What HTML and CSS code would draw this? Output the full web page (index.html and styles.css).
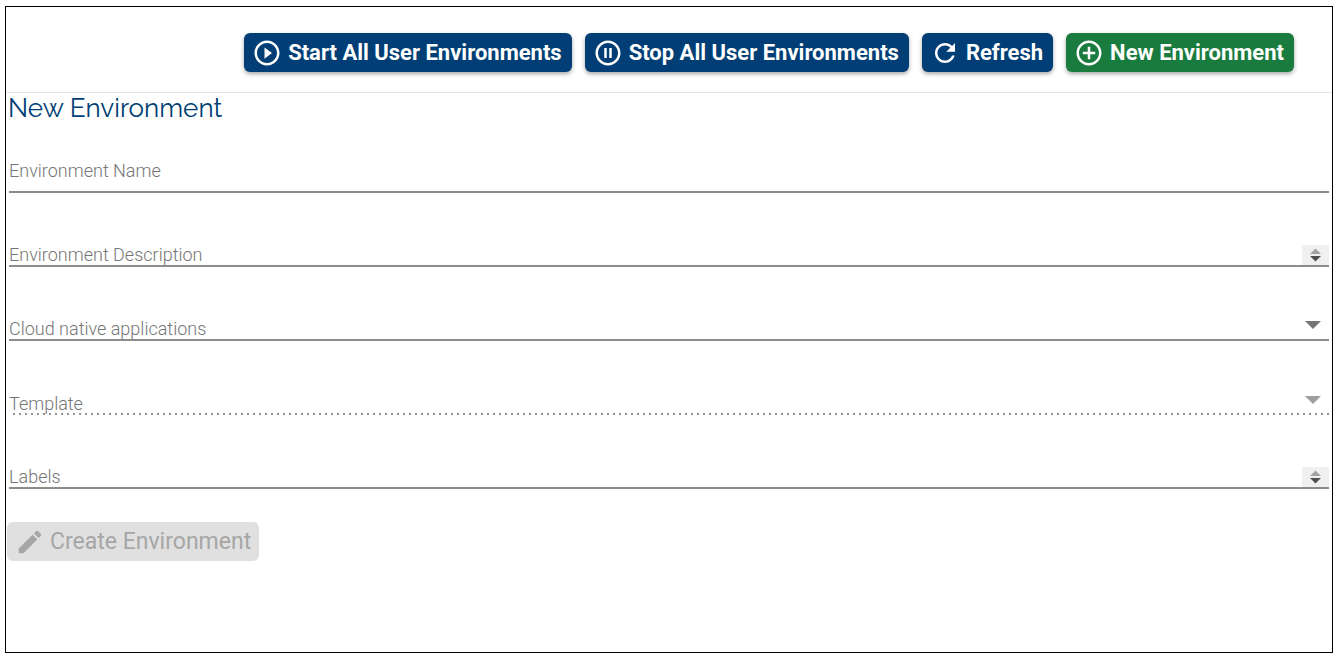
FILE: index.html
```html
<!DOCTYPE html>
<html lang="en">
<head>
<meta charset="utf-8">
<title>New Environment</title>
<link rel="stylesheet" href="styles.css">
</head>
<body>
<main class="panel">
  <header class="toolbar">
    <button class="btn btn-primary" type="button">
      <svg class="icon" viewBox="0 0 24 24" aria-hidden="true"><path d="M10 16.500l6-4.500-6-4.500v9zM12 2C6.480 2 2 6.480 2 12s4.480 10 10 10 10-4.480 10-10S17.520 2 12 2zm0 18c-4.410 0-8-3.590-8-8s3.590-8 8-8 8 3.590 8 8-3.590 8-8 8z"/></svg>
      <span>Start All User Environments</span>
    </button>
    <button class="btn btn-primary" type="button">
      <svg class="icon" viewBox="0 0 24 24" aria-hidden="true"><path d="M9 16h2V8H9v8zm3-14C6.480 2 2 6.480 2 12s4.480 10 10 10 10-4.480 10-10S17.520 2 12 2zm0 18c-4.410 0-8-3.590-8-8s3.590-8 8-8 8 3.590 8 8-3.590 8-8 8zm1-4h2V8h-2v8z"/></svg>
      <span>Stop All User Environments</span>
    </button>
    <button class="btn btn-primary" type="button">
      <svg class="icon" viewBox="0 0 24 24" aria-hidden="true"><path d="M17.650 6.350C16.200 4.900 14.210 4 12 4c-4.420 0-7.990 3.580-7.990 8s3.570 8 7.990 8c3.730 0 6.840-2.550 7.730-6h-2.080c-.82 2.330-3.040 4-5.650 4-3.310 0-6-2.690-6-6s2.690-6 6-6c1.660 0 3.140.69 4.220 1.780L13 11h7V4l-2.350 2.350z"/></svg>
      <span>Refresh</span>
    </button>
    <button class="btn btn-success" type="button">
      <svg class="icon" viewBox="0 0 24 24" aria-hidden="true"><path d="M13 7h-2v4H7v2h4v4h2v-4h4v-2h-4V7zm-1-5C6.480 2 2 6.480 2 12s4.480 10 10 10 10-4.480 10-10S17.520 2 12 2zm0 18c-4.410 0-8-3.590-8-8s3.590-8 8-8 8 3.590 8 8-3.590 8-8 8z"/></svg>
      <span>New Environment</span>
    </button>
  </header>
  <h1 class="title">New Environment</h1>
  <form class="form">
    <div class="field field-name">
      <label class="label" for="name">Environment Name</label>
      <input class="control" id="name" type="text">
    </div>
    <div class="field">
      <label class="label" for="description">Environment Description</label>
      <textarea class="control" id="description" rows="1"></textarea>
      <svg class="stepper" viewBox="0 0 27 19" aria-hidden="true"><path class="step-up" d="M8 8.500L13.500 3l5.500 5.500z"/><path class="step-down" d="M8 10.500h11L13.500 16z"/></svg>
    </div>
    <div class="field">
      <label class="label" for="apps">Cloud native applications</label>
      <select class="control" id="apps"><option></option></select>
      <svg class="arrow" viewBox="0 0 16 8" aria-hidden="true"><path d="M0 0h16L8 8z"/></svg>
    </div>
    <div class="field field-disabled">
      <label class="label" for="template">Template</label>
      <select class="control" id="template" disabled><option></option></select>
      <svg class="arrow" viewBox="0 0 16 8" aria-hidden="true"><path d="M0 0h16L8 8z"/></svg>
    </div>
    <div class="field">
      <label class="label" for="labels">Labels</label>
      <textarea class="control" id="labels" rows="1"></textarea>
      <svg class="stepper" viewBox="0 0 27 19" aria-hidden="true"><path class="step-up" d="M8 8.500L13.500 3l5.500 5.500z"/><path class="step-down" d="M8 10.500h11L13.500 16z"/></svg>
    </div>
    <button class="btn btn-create" type="submit" disabled>
      <svg class="icon" viewBox="0 0 24 24" aria-hidden="true"><path d="M3 17.250V21h3.750L17.810 9.940l-3.750-3.750L3 17.250zM20.710 7.040c.39-.39.39-1.020 0-1.410l-2.340-2.340c-.39-.39-1.020-.39-1.410 0l-1.830 1.830 3.750 3.750 1.830-1.830z"/></svg>
      <span>Create Environment</span>
    </button>
  </form>
</main>
</body>
</html>
```
FILE: styles.css
```css
* {
  box-sizing: border-box;
}

body {
  margin: 0;
  padding: 6px 6px 6px 5px;
  background: #fff;
  font-family: Roboto, "Liberation Sans", sans-serif;
}

.panel {
  min-height: calc(100vh - 12px);
  border: 1px solid #000;
}

.toolbar {
  display: flex;
  flex-wrap: wrap;
  justify-content: flex-end;
  gap: 13px;
  padding: 26px 38px 20px;
  border-bottom: 1px solid #e3e5e8;
}

.btn {
  display: flex;
  align-items: center;
  gap: 6px;
  height: 39px;
  padding: 0 10px 0 8px;
  border: 0;
  border-radius: 6px;
  color: #fff;
  font-family: inherit;
  font-size: 22px;
  font-weight: 700;
  line-height: 39px;
  white-space: nowrap;
}

.btn-primary,
.btn-success {
  box-shadow: 0 2px 4px rgba(0, 0, 0, 0.35);
}

.btn-primary {
  background: #003e75;
}

.btn-success {
  background: #197b3e;
}

.icon {
  width: 30px;
  height: 30px;
  fill: currentColor;
}

.title {
  margin: 0;
  padding-left: 2px;
  color: #003e75;
  font-family: Raleway, Lato, sans-serif;
  font-size: 26px;
  font-weight: 400;
  line-height: 30px;
}

.form {
  padding: 0 3px 0 1px;
}

.field {
  display: grid;
  grid-template-columns: 1fr auto;
  align-items: end;
  height: 74px;
  margin-left: 2px;
  border-bottom: 2px solid #8c8c8c;
}

.field-name {
  height: 70px;
  padding-bottom: 10px;
}

.label {
  grid-area: 1 / 1;
  z-index: 1;
  color: #757575;
  font-size: 18px;
  font-weight: 300;
  line-height: 21px;
  pointer-events: none;
}

.control {
  grid-area: 1 / 1 / 2 / 3;
  width: 100%;
  height: 24px;
  margin: 0;
  padding: 0;
  border: 0;
  outline: 0;
  appearance: none;
  background: transparent;
  color: #222;
  font: inherit;
  font-size: 18px;
  resize: none;
  overflow: hidden;
}

.stepper {
  grid-area: 1 / 2;
  width: 27px;
  height: 20px;
  background: #f0f0f0;
}

.step-up {
  fill: #a3a3a3;
}

.step-down {
  fill: #505050;
}

.arrow {
  grid-area: 1 / 2;
  width: 16px;
  height: 8px;
  margin: 0 8px 10px 0;
  fill: #757575;
  pointer-events: none;
}

.field-disabled {
  border-bottom: 0;
  padding-bottom: 1px;
  background: repeating-linear-gradient(to left, #949494 0 2px, transparent 2px 6px) bottom / 100% 2px no-repeat;
}

.field-disabled .arrow {
  fill: #9e9e9e;
}

.btn-create {
  gap: 5px;
  margin-top: 33px;
  padding: 0 8px;
  background: #e0e0e0;
  color: #a6a6a6;
  font-size: 23px;
  font-weight: 400;
}
```
